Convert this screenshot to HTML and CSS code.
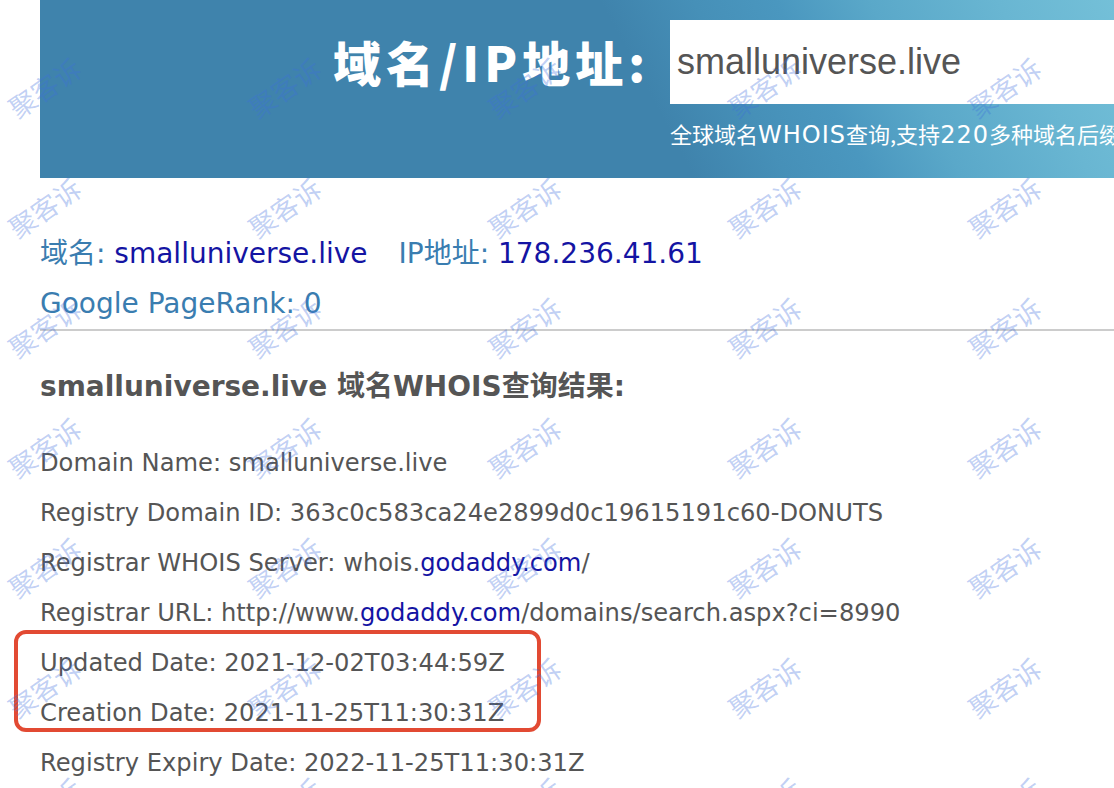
FILE: index.html
```html
<!DOCTYPE html>
<html lang="zh-CN">
<head>
    <meta charset="UTF-8">
    <meta name="viewport" content="width=device-width, initial-scale=1.0">
    <title>smalluniverse.live 域名WHOIS查询结果</title>
    <link rel="stylesheet" href="styles.css">
</head>
<body>
    <div class="banner">
        <h1 class="banner-title">域名/IP地址:</h1>
        <div class="search">
            <input class="search-input" type="text" value="smalluniverse.live">
            <div class="search-tip">全球域名<span class="en">WHOIS</span>查询,支持<span class="en">220</span>多种域名后缀查询</div>
        </div>
    </div>

    <div class="info">
        <div class="info-line">
            <span class="label">域名: </span><a class="value" href="#">smalluniverse.live</a>
            <span class="label ip">IP地址: </span><a class="value" href="#">178.236.41.61</a>
        </div>
        <div class="info-line label">Google PageRank: 0</div>
    </div>
    <div class="rule"></div>

    <div class="whois">
        <h2 class="whois-title">smalluniverse.live 域名WHOIS查询结果:</h2>
        <p>Domain Name: smalluniverse.live</p>
        <p>Registry Domain ID: 363c0c583ca24e2899d0c19615191c60-DONUTS</p>
        <p>Registrar WHOIS Server: whois.<a href="#">godaddy.com</a>/</p>
        <p>Registrar URL: http://www.<a href="#">godaddy.com</a>/domains/search.aspx?ci=8990</p>
        <div class="mark">
            <p>Updated Date: 2021-12-02T03:44:59Z</p>
            <p>Creation Date: 2021-11-25T11:30:31Z</p>
        </div>
        <p>Registry Expiry Date: 2022-11-25T11:30:31Z</p>
    </div>

    <!-- 水印 -->
    <div class="watermark">
        <span>聚客诉</span><span>聚客诉</span><span>聚客诉</span><span>聚客诉</span><span>聚客诉</span>
        <span>聚客诉</span><span>聚客诉</span><span>聚客诉</span><span>聚客诉</span><span>聚客诉</span>
        <span>聚客诉</span><span>聚客诉</span><span>聚客诉</span><span>聚客诉</span><span>聚客诉</span>
        <span>聚客诉</span><span>聚客诉</span><span>聚客诉</span><span>聚客诉</span><span>聚客诉</span>
        <span>聚客诉</span><span>聚客诉</span><span>聚客诉</span><span>聚客诉</span><span>聚客诉</span>
        <span>聚客诉</span><span>聚客诉</span><span>聚客诉</span><span>聚客诉</span><span>聚客诉</span>
        <span>聚客诉</span><span>聚客诉</span><span>聚客诉</span><span>聚客诉</span><span>聚客诉</span>
    </div>
</body>
</html>
```

FILE: styles.css
```css
html, body {
    margin: 0;
}
body {
    font-family: "DejaVu Sans", "Noto Sans CJK SC", sans-serif;
    color: #555;
    background-color: #fff;
    position: relative;
    overflow: hidden;
    height: 788px;
}
a {
    color: #1414a3;
    text-decoration: none;
}

/* 顶部搜索条 */
.banner {
    display: flex;
    margin-left: 40px;
    height: 178px;
    background: linear-gradient(62deg, #3f83ac 0%, #3f83ac 56%, #4690b8 64%, #4a97bf 71%, #5aa8c9 79%, #69b6d2 90%, #74c0d8 100%);
}
.banner-title {
    width: 610px;
    margin: 0;
    padding-top: 20px;
    text-align: right;
    font-family: "Noto Sans CJK SC", sans-serif;
    font-size: 48px;
    font-weight: 900;
    line-height: 82px;
    letter-spacing: 5px;
    color: #fff;
}
.search {
    flex: 1;
    min-width: 0;
    margin-left: 20px;
    padding-top: 20px;
}
.search-input {
    display: block;
    width: 100%;
    height: 84px;
    box-sizing: border-box;
    border: none;
    outline: none;
    padding: 0 7px;
    font-family: "Liberation Sans", Arial, sans-serif;
    font-size: 36px;
    color: #555;
    background-color: #fff;
}
.search-tip {
    margin-top: 14px;
    font-family: "Noto Sans CJK SC", sans-serif;
    font-size: 22px;
    line-height: 30px;
    color: #fff;
    white-space: nowrap;
}
.search-tip .en {
    font-family: "DejaVu Sans", sans-serif;
    font-size: 24px;
    letter-spacing: 1px;
}

/* 域名 / IP 信息 */
.info {
    margin-top: 51px;
    padding-left: 40px;
}
.info-line {
    font-size: 28px;
    line-height: 50px;
    white-space: nowrap;
}
.label {
    color: #3a7db0;
}
.value {
    color: #1414a3;
}
.ip {
    margin-left: 22px;
}
.rule {
    margin-left: 40px;
    border-top: 2px solid #ccc;
}

/* WHOIS 结果 */
.whois {
    padding-left: 40px;
}
.whois-title {
    margin: 31px 0 26px;
    font-size: 28px;
    line-height: 50px;
    font-weight: bold;
    color: #555;
}
.whois p {
    margin: 0;
    font-size: 24.2px;
    line-height: 50px;
    white-space: nowrap;
}
.mark {
    position: relative;
}
.mark::after {
    content: '';
    position: absolute;
    left: -26px;
    top: -8px;
    bottom: 6px;
    width: 527px;
    box-sizing: border-box;
    border: 4px solid #e24a33;
    border-radius: 12px;
}

/* 水印 */
.watermark {
    position: absolute;
    top: 27px;
    left: -76px;
    display: grid;
    grid-template-columns: repeat(5, 240px);
    grid-auto-rows: 120px;
    pointer-events: none;
}
.watermark span {
    display: flex;
    align-items: center;
    justify-content: center;
    transform: rotate(-35deg);
    font-family: "Noto Sans CJK SC", sans-serif;
    font-size: 27px;
    color: rgba(60, 110, 220, 0.33);
}
```
